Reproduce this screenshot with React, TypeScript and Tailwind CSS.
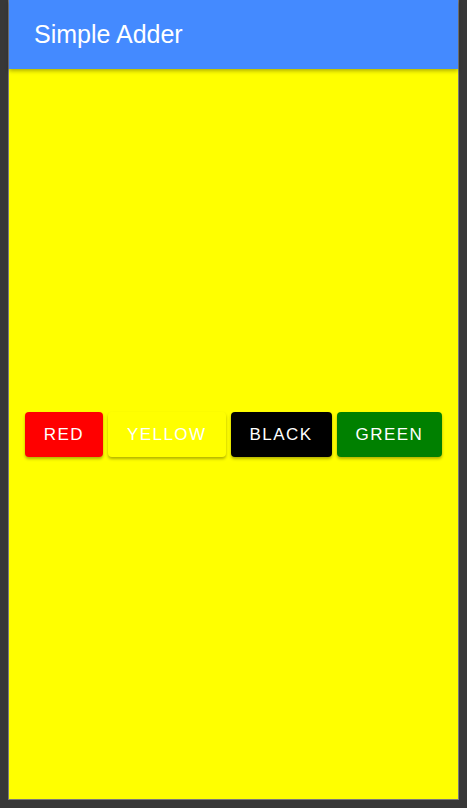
const colors = [
  { label: 'RED', bg: 'bg-[#ff0000]' },
  { label: 'YELLOW', bg: 'bg-[#ffff00]' },
  { label: 'BLACK', bg: 'bg-[#000000]' },
  { label: 'GREEN', bg: 'bg-[#008000]' },
];

export default function App() {
  return (
    <div
      className="h-[808px] w-[467px] bg-[#383838] px-[8px] pb-[8px] flex flex-col"
      style={{ fontFamily: '"Liberation Sans", Arial, sans-serif' }}
    >
      <div className="flex-1 flex flex-col border-x border-b border-[#7a7a7a] bg-[#ffff00]">
        {/* Header */}
        <header className="h-[69px] bg-[#448aff] flex items-center pl-[25px] shadow-[0_2px_4px_rgba(0,0,0,0.3)] z-10">
          <h1 className="text-[25px] text-white leading-none pb-[1px]">Simple Adder</h1>
        </header>

        {/* Buttons */}
        <main className="flex-1 flex items-center justify-center">
          <div className="flex gap-[5px] mt-[1px]">
            {colors.map((c) => (
              <button
                key={c.label}
                className={`${c.bg} h-[45px] px-[19px] rounded-[4px] text-white text-[17px] tracking-[1.45px] shadow-[0_2px_3px_rgba(0,0,0,0.3)]`}
              >
                {c.label}
              </button>
            ))}
          </div>
        </main>
      </div>
    </div>
  );
}
